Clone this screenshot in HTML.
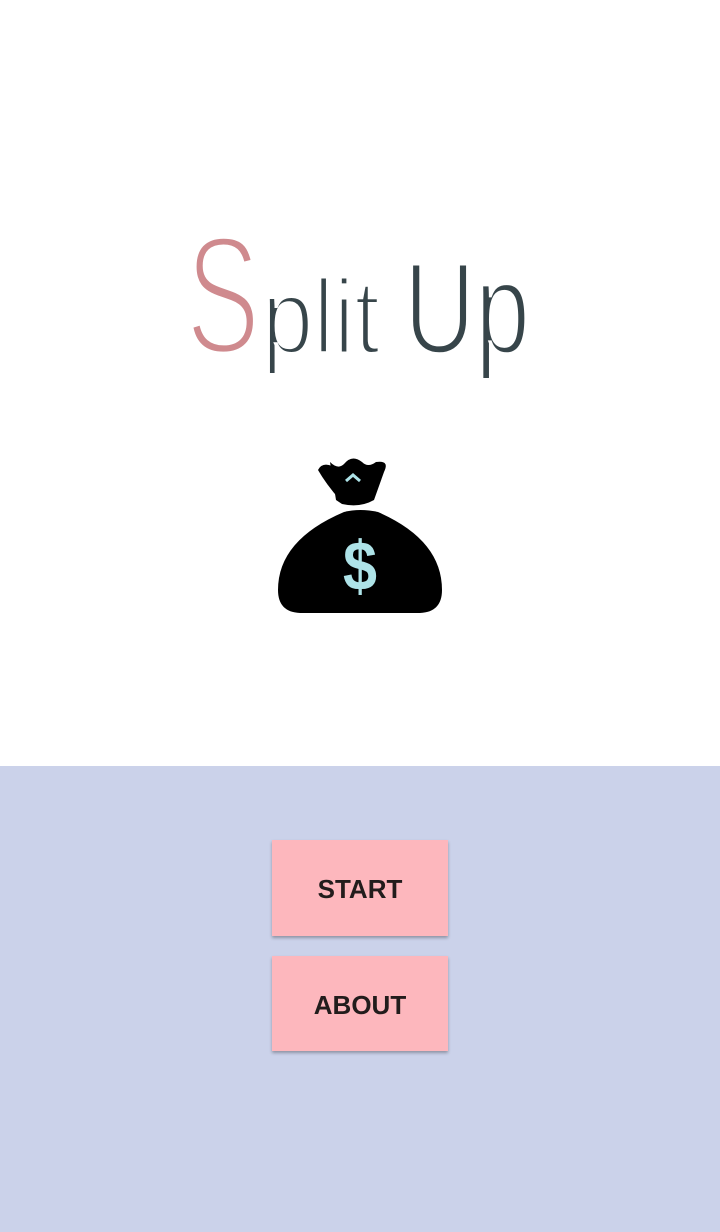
<html><head><style>
body{margin:0;width:720px;height:1232px;overflow:hidden;background:#fff;font-family:"Liberation Sans",sans-serif}
.bot{position:absolute;left:0;top:766px;width:720px;height:466px;background:#cbd2ea}
.btn{position:absolute;left:272px;width:176px;background:#fdb7bd;color:#221c1c;font-size:26px;font-weight:bold;text-align:center;box-shadow:0 2px 3px rgba(0,0,0,.3)}
</style></head><body>
<svg width="720" height="766" style="position:absolute;left:0;top:0">
<text x="186" y="353" font-size="168" fill="#cf8a8e" font-family="Liberation Sans" textLength="74" lengthAdjust="spacingAndGlyphs" stroke="#fff" stroke-width="6">S</text>
<text x="262" y="353" font-size="106" fill="#37454a" font-family="Liberation Sans" textLength="118" lengthAdjust="spacingAndGlyphs" stroke="#fff" stroke-width="4">plit</text>
<text x="404" y="353" font-size="130" fill="#37454a" font-family="Liberation Sans" textLength="126" lengthAdjust="spacingAndGlyphs" stroke="#fff" stroke-width="4">Up</text>
<path d="M330 462 Q338 470 344 464 Q352 454 362 462 Q368 468 376 462 Q390 460 384 472 L374 500 Q360 508 342 504 L336 500 Z" fill="#000"/>
<path d="M318 470 Q322 462 332 466 L340 500 Q326 484 318 470Z" fill="#000"/>
<path d="M346 481 L353 475 L360 481" stroke="#aee3e8" stroke-width="3" fill="none"/>
<path d="M344 512 Q360 508 378 512 Q442 540 442 590 Q442 612 420 613 L300 613 Q278 612 278 590 Q278 540 344 512Z" fill="#000"/>
<text x="360" y="590" font-size="70" font-weight="bold" fill="#aee3e8" text-anchor="middle" font-family="Liberation Sans" textLength="34" lengthAdjust="spacingAndGlyphs">$</text>
</svg>
<div class="bot"></div>
<div class="btn" style="top:840px;height:96px;line-height:98px">START</div>
<div class="btn" style="top:956px;height:95px;line-height:98px">ABOUT</div>
</body></html>
